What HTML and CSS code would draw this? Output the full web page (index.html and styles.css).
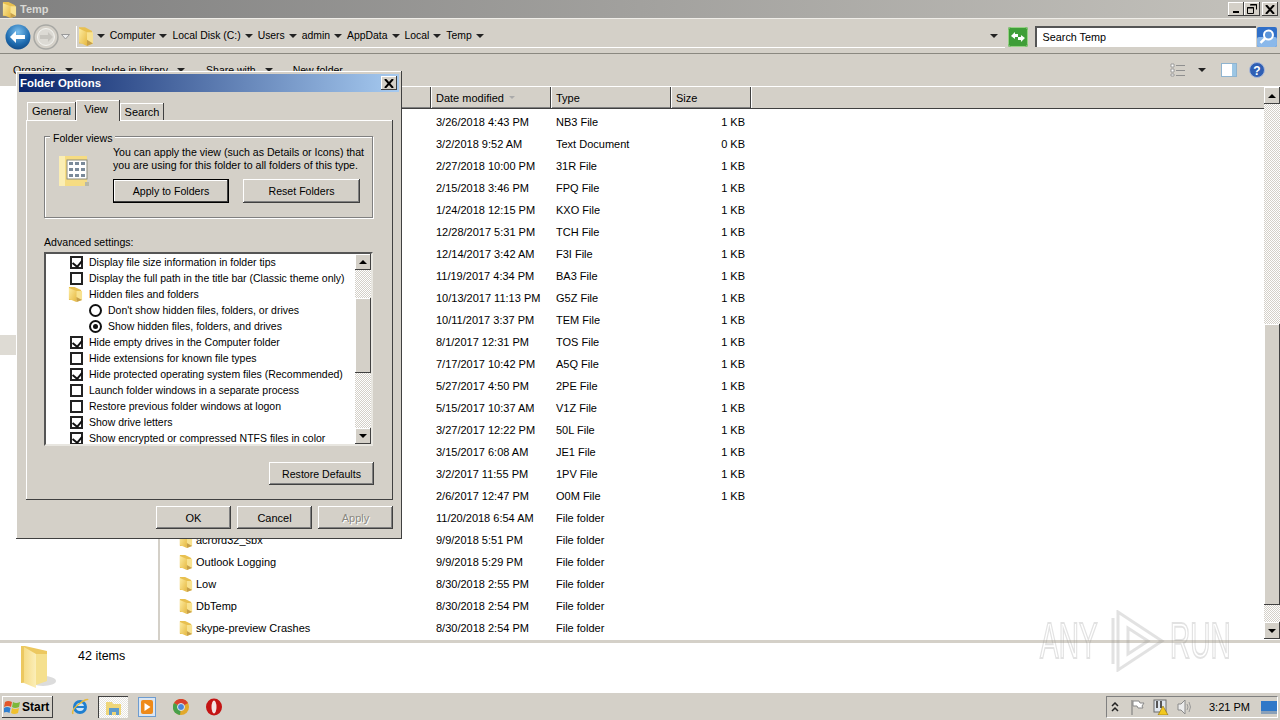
FILE: index.html
```html
<!DOCTYPE html>
<html lang="en">
<head>
    <meta charset="UTF-8">
    <title>Temp</title>
    <link rel="stylesheet" href="styles.css">
</head>
<body>
    <svg class="defs" width="0" height="0">
        <defs>
            <linearGradient id="fold" x1="0" y1="0" x2="1" y2="1">
                <stop offset="0" stop-color="#fdeca0"/>
                <stop offset="1" stop-color="#e6b840"/>
            </linearGradient>
            <symbol id="folder" viewBox="0 0 16 16" preserveAspectRatio="none">
                <path d="M1 1h6l7 3v10H1z" fill="#e8c050"/>
                <path d="M1 2l8 3v11l-8-3z" fill="url(#fold)"/>
                <path d="M9 5h6v9l-6 2z" fill="#f8e290"/>
                <path d="M9 11l6 3-6 2z" fill="#c8a048"/>
            </symbol>
        </defs>
    </svg>

    <header class="titlebar">
        <svg class="title-icon" width="15" height="17"><use href="#folder"/></svg>
        <span class="title-text">Temp</span>
        <div class="win-buttons">
            <div class="win-btn"><i class="glyph-min"></i></div>
            <div class="win-btn">
                <svg width="10" height="10" viewBox="0 0 10 10"><path d="M3.500.5h6v5M.5 3.500h6v6h-6z" fill="none" stroke="#000"/><path d="M3 1h7M0 4h7" stroke="#000"/></svg>
            </div>
            <div class="win-btn win-close"><svg width="10" height="9"><path d="M1 0l8 9M9 0l-8 9" stroke="#000" stroke-width="2"/></svg></div>
        </div>
    </header>

    <div class="addressbar">
        <svg class="nav-back" width="26" height="26" viewBox="0 0 26 26">
            <defs>
                <radialGradient id="blue" cx=".5" cy=".3" r=".8"><stop offset="0" stop-color="#7cc0ee"/><stop offset=".6" stop-color="#1f6cb0"/><stop offset="1" stop-color="#0c3f78"/></radialGradient>
            </defs>
            <circle cx="13" cy="13" r="12.500" fill="url(#blue)"/>
            <path d="M5 13l6-6v4h9v4h-9v4z" fill="#fff"/>
        </svg>
        <svg class="nav-forward" width="26" height="26" viewBox="0 0 26 26">
            <circle cx="13" cy="13" r="12" fill="#d4d0c8" stroke="#a8a8a4" stroke-width="1.500"/>
            <circle cx="13" cy="13" r="8.500" fill="#dcdad4" stroke="#f4f4f0"/>
            <path d="M20 13l-5-5v3H7v4h8v3z" fill="#c6c4be"/>
        </svg>
        <svg class="nav-drop" width="9" height="6"><path d="M.5.5h8L4.500 5z" fill="#eee" stroke="#999"/></svg>
        <div class="crumbs">
            <svg class="crumb-folder" width="16" height="20"><use href="#folder"/></svg>
            <span class="crumb"><i class="arrow"></i>Computer</span>
            <span class="crumb"><i class="arrow"></i>Local Disk (C:)</span>
            <span class="crumb"><i class="arrow"></i>Users</span>
            <span class="crumb"><i class="arrow"></i>admin</span>
            <span class="crumb"><i class="arrow"></i>AppData</span>
            <span class="crumb"><i class="arrow"></i>Local</span>
            <span class="crumb"><i class="arrow"></i>Temp</span>
            <span class="crumb"><i class="arrow"></i></span>
            <i class="arrow crumbs-drop"></i>
        </div>
        <svg class="refresh" width="20" height="20" viewBox="0 0 20 20">
            <rect width="20" height="20" rx="2" fill="#3f9e38"/>
            <rect x=".5" y=".5" width="19" height="19" rx="2" fill="none" stroke="#9ad488"/>
            <path d="M3 9l4-4v2h3v3H7v2zM17 11l-4 4v-2h-3v-3h3V8z" fill="#fff"/>
        </svg>
        <div class="searchbox">Search Temp</div>
        <svg class="searchbtn" width="20" height="20" viewBox="0 0 20 20">
            <rect width="20" height="20" rx="2" fill="#2f6fc8"/>
            <rect y="10" width="20" height="10" rx="2" fill="#8ab8ea"/>
            <circle cx="11.500" cy="8" r="4.500" fill="#5a94da" stroke="#fff" stroke-width="2"/>
            <path d="M8 11.500l-4.500 4.500" stroke="#fff" stroke-width="2.500"/>
        </svg>
    </div>

    <div class="toolbar">
        <span class="tool tool-organize">Organize<i class="arrow"></i></span>
        <span class="tool tool-library">Include in library<i class="arrow"></i></span>
        <span class="tool tool-share">Share with<i class="arrow"></i></span>
        <span class="tool">New folder</span>
        <div class="tool-icons">
            <svg width="16" height="14" viewBox="0 0 16 14">
                <path d="M1 1h3v3H1zM1 6h3v3H1zM1 11h3v2H1z" fill="#fff" stroke="#8a8a8a" stroke-width=".8"/>
                <path d="M6 2.500h9M6 7.500h9M6 12.500h9" stroke="#8f8f8f"/>
            </svg>
            <i class="arrow view-arrow"></i>
            <svg class="pane-icon" width="16" height="14" viewBox="0 0 16 14">
                <rect x=".5" y=".5" width="15" height="13" fill="#fff" stroke="#8fb4d0"/>
                <rect x="11" y="1" width="4" height="12" fill="#9cc6e4"/>
            </svg>
            <svg class="help-icon" width="16" height="16" viewBox="0 0 16 16">
                <circle cx="8" cy="8" r="7.500" fill="#2f5fb4" stroke="#a9b8d8"/>
                <text x="8" y="12.500" text-anchor="middle" class="help-mark">?</text>
            </svg>
        </div>
    </div>

    <main class="explorer">
        <nav class="navpane"><div class="nav-grip"></div></nav>
        <section class="files">
            <div class="cols head">
                <div class="hcell"></div>
                <div class="hcell">Date modified<i class="sort"></i></div>
                <div class="hcell">Type</div>
                <div class="hcell">Size</div>
                <div class="hcell hfill"></div>
            </div>
            <div class="rows">
                <div class="cols row"><span></span><span>3/26/2018 4:43 PM</span><span>NB3 File</span><span class="size">1 KB</span></div>
                <div class="cols row"><span></span><span>3/2/2018 9:52 AM</span><span>Text Document</span><span class="size">0 KB</span></div>
                <div class="cols row"><span></span><span>2/27/2018 10:00 PM</span><span>31R File</span><span class="size">1 KB</span></div>
                <div class="cols row"><span></span><span>2/15/2018 3:46 PM</span><span>FPQ File</span><span class="size">1 KB</span></div>
                <div class="cols row"><span></span><span>1/24/2018 12:15 PM</span><span>KXO File</span><span class="size">1 KB</span></div>
                <div class="cols row"><span></span><span>12/28/2017 5:31 PM</span><span>TCH File</span><span class="size">1 KB</span></div>
                <div class="cols row"><span></span><span>12/14/2017 3:42 AM</span><span>F3I File</span><span class="size">1 KB</span></div>
                <div class="cols row"><span></span><span>11/19/2017 4:34 PM</span><span>BA3 File</span><span class="size">1 KB</span></div>
                <div class="cols row"><span></span><span>10/13/2017 11:13 PM</span><span>G5Z File</span><span class="size">1 KB</span></div>
                <div class="cols row"><span></span><span>10/11/2017 3:37 PM</span><span>TEM File</span><span class="size">1 KB</span></div>
                <div class="cols row"><span></span><span>8/1/2017 12:31 PM</span><span>TOS File</span><span class="size">1 KB</span></div>
                <div class="cols row"><span></span><span>7/17/2017 10:42 PM</span><span>A5Q File</span><span class="size">1 KB</span></div>
                <div class="cols row"><span></span><span>5/27/2017 4:50 PM</span><span>2PE File</span><span class="size">1 KB</span></div>
                <div class="cols row"><span></span><span>5/15/2017 10:37 AM</span><span>V1Z File</span><span class="size">1 KB</span></div>
                <div class="cols row"><span></span><span>3/27/2017 12:22 PM</span><span>50L File</span><span class="size">1 KB</span></div>
                <div class="cols row"><span></span><span>3/15/2017 6:08 AM</span><span>JE1 File</span><span class="size">1 KB</span></div>
                <div class="cols row"><span></span><span>3/2/2017 11:55 PM</span><span>1PV File</span><span class="size">1 KB</span></div>
                <div class="cols row"><span></span><span>2/6/2017 12:47 PM</span><span>O0M File</span><span class="size">1 KB</span></div>
                <div class="cols row"><span></span><span>11/20/2018 6:54 AM</span><span>File folder</span><span></span></div>
                <div class="cols row"><span class="name"><svg width="14" height="16"><use href="#folder"/></svg>acrord32_sbx</span><span>9/9/2018 5:51 PM</span><span>File folder</span><span></span></div>
                <div class="cols row"><span class="name"><svg width="14" height="16"><use href="#folder"/></svg>Outlook Logging</span><span>9/9/2018 5:29 PM</span><span>File folder</span><span></span></div>
                <div class="cols row"><span class="name"><svg width="14" height="16"><use href="#folder"/></svg>Low</span><span>8/30/2018 2:55 PM</span><span>File folder</span><span></span></div>
                <div class="cols row"><span class="name"><svg width="14" height="16"><use href="#folder"/></svg>DbTemp</span><span>8/30/2018 2:54 PM</span><span>File folder</span><span></span></div>
                <div class="cols row"><span class="name"><svg width="14" height="16"><use href="#folder"/></svg>skype-preview Crashes</span><span>8/30/2018 2:54 PM</span><span>File folder</span><span></span></div>
            </div>
        </section>
        <div class="vscroll main-scroll">
            <div class="sbtn"><i class="tri-up"></i></div>
            <div class="track"><div class="thumb"></div></div>
            <div class="sbtn"><i class="tri-down"></i></div>
        </div>
    </main>

    <div class="statusbar">
        <svg width="38" height="44" viewBox="0 0 38 44">
            <defs>
                <linearGradient id="bigfold" x1="0" y1="0" x2="1" y2="0"><stop offset="0" stop-color="#f6dc88"/><stop offset="1" stop-color="#fbeeb8"/></linearGradient>
            </defs>
            <ellipse cx="24" cy="36" rx="13" ry="5" fill="#dcdcdc"/>
            <path d="M2 1h4l22 5v30L2 38z" fill="#ecc860"/>
            <path d="M5 2l12 7v34L5 38z" fill="url(#bigfold)"/>
            <path d="M17 9h11v27l-11 4z" fill="#f5e08e"/>
        </svg>
        <span class="status-text">42 items</span>
    </div>

    <footer class="taskbar">
        <div class="startbtn">
            <svg width="17" height="16" viewBox="0 0 17 16">
                <path d="M1 3q3-2 7 0l-1 5q-3-2-7 0z" fill="#e2562a"/>
                <path d="M9 3q3 2 7 0l-1 5q-4 2-7 0z" fill="#7cb83a"/>
                <path d="M0 9q3-2 6.500 0l-1 5q-3-2-7 0z" fill="#2f7fd0"/>
                <path d="M8 9q3 2 7 0l-1 5q-4 2-7 0z" fill="#f0c02c"/>
            </svg>
            <span>Start</span>
        </div>
        <div class="quick">
            <svg class="q-ie" width="18" height="18" viewBox="0 0 18 18">
                <circle cx="9" cy="9" r="5.500" fill="#cfe6f8" stroke="#1f7fd0" stroke-width="3"/>
                <path d="M4 9h10" stroke="#1f7fd0" stroke-width="2"/>
                <path d="M2 16Q0 12 8 6t9-4" fill="none" stroke="#e6b93a" stroke-width="1.500"/>
            </svg>
            <div class="q-explorer">
                <svg width="18" height="18" viewBox="0 0 18 18">
                    <path d="M1 3h6l1 2h8v11H1z" fill="#efd678"/>
                    <path d="M4 9h10v7h-3v-3H7v3H4z" fill="#5f9ccc"/>
                </svg>
            </div>
            <svg class="q-media" width="18" height="20" viewBox="0 0 18 20">
                <rect x=".5" y=".5" width="17" height="19" fill="#dbe6f2" stroke="#6d9cd0"/>
                <rect x="3" y="3" width="12" height="14" rx="2" fill="#ee8a1a"/>
                <path d="M6.500 6l6 4-6 4z" fill="#fff"/>
            </svg>
            <svg class="q-chrome" width="16" height="16" viewBox="0 0 16 16">
                <circle cx="8" cy="8" r="8" fill="#e2a92c"/>
                <path d="M8 8L1 4a8 8 0 0 1 14 0z" fill="#d8402f"/>
                <path d="M8 8L1 4a8 8 0 0 0 6 12z" fill="#48a04a"/>
                <circle cx="8" cy="8" r="3.500" fill="#4a86dc" stroke="#e8e8e8"/>
            </svg>
            <svg class="q-opera" width="16" height="18" viewBox="0 0 16 18">
                <ellipse cx="8" cy="9" rx="8" ry="8.500" fill="#c41414"/>
                <ellipse cx="8" cy="9" rx="2.500" ry="6.500" fill="#f4e4e4"/>
            </svg>
        </div>
        <div class="tray">
            <svg width="8" height="10" viewBox="0 0 8 10"><path d="M1 4l3-3 3 3M1 9l3-3 3 3" fill="none" stroke="#222" stroke-width="1.500"/></svg>
            <svg class="tray-flag" width="15" height="16" viewBox="0 0 15 16"><path d="M2 1v15" stroke="#777"/><path d="M3 2h6l1 2h4l-2 3 1 2H8L7 7H3z" fill="#fff" stroke="#888"/></svg>
            <svg width="16" height="16" viewBox="0 0 16 16">
                <rect x="1" y="1" width="12" height="12" fill="#dfe6ee" stroke="#6a6a6a"/>
                <path d="M4 2v7M8 2v7" stroke="#555" stroke-width="2"/>
                <path d="M10 7l5 9H5z" fill="#f2c81e" stroke="#8a6a10" stroke-width=".6"/>
            </svg>
            <svg width="16" height="16" viewBox="0 0 16 16">
                <path d="M1 5h3l4-4v14l-4-4H1z" fill="#ececec" stroke="#8a8a8a"/>
                <path d="M10 5q2 3 0 6M12 3q3 5 0 10" fill="none" stroke="#9a9a9a"/>
            </svg>
            <span class="clock">3:21 PM</span>
            <svg class="tray-desktop" width="16" height="13" viewBox="0 0 16 13">
                <rect width="16" height="10" fill="#2f78c8"/>
                <rect y="10" width="16" height="3" fill="#8aa0b8"/>
            </svg>
        </div>
    </footer>

    <div class="dialog">
        <div class="dlg-title">
            <span>Folder Options</span>
            <div class="dlg-close"><svg width="10" height="9"><path d="M1 0l8 9M9 0l-8 9" stroke="#000" stroke-width="2"/></svg></div>
        </div>
        <div class="tabs">
            <div class="tab tab-general">General</div>
            <div class="tab tab-active">View</div>
            <div class="tab tab-search">Search</div>
        </div>
        <div class="sheet">
            <div class="group">
                <span class="group-label">Folder views</span>
                <svg class="fv-icon" width="32" height="34" viewBox="0 0 32 34">
                    <path d="M1 1h28v30H1z" fill="#f6dc82"/>
                    <path d="M1 1h6v30H1z" fill="#fbeeb4"/>
                    <rect x="9" y="5" width="20" height="19" fill="#fff" stroke="#8a8a7a"/>
                    <path d="M11 7h4v3h-4zM17 7h4v3h-4zM23 7h4v3h-4zM11 13h4v3h-4zM17 13h4v3h-4zM23 13h4v3h-4zM11 19h4v3h-4zM17 19h4v3h-4zM23 19h4v3h-4z" fill="#7a8a9a"/>
                    <rect x="27" y="27" width="4" height="4" fill="#b8b8a8"/>
                </svg>
                <div class="group-body">
                    <p>You can apply the view (such as Details or Icons) that<br>you are using for this folder to all folders of this type.</p>
                    <div class="group-btns">
                        <div class="btn btn-default">Apply to Folders</div>
                        <div class="btn btn-reset">Reset Folders</div>
                    </div>
                </div>
            </div>
            <div class="adv-label">Advanced settings:</div>
            <div class="listbox">
                <div class="opts">
                    <div class="opt"><i class="check on"></i>Display file size information in folder tips</div>
                    <div class="opt"><i class="check"></i>Display the full path in the title bar (Classic theme only)</div>
                    <div class="opt opt-folder"><svg width="15" height="16"><use href="#folder"/></svg>Hidden files and folders</div>
                    <div class="opt opt-radio"><i class="radio"></i>Don't show hidden files, folders, or drives</div>
                    <div class="opt opt-radio"><i class="radio on"></i>Show hidden files, folders, and drives</div>
                    <div class="opt"><i class="check on"></i>Hide empty drives in the Computer folder</div>
                    <div class="opt"><i class="check"></i>Hide extensions for known file types</div>
                    <div class="opt"><i class="check on"></i>Hide protected operating system files (Recommended)</div>
                    <div class="opt"><i class="check"></i>Launch folder windows in a separate process</div>
                    <div class="opt"><i class="check"></i>Restore previous folder windows at logon</div>
                    <div class="opt"><i class="check on"></i>Show drive letters</div>
                    <div class="opt"><i class="check on"></i>Show encrypted or compressed NTFS files in color</div>
                </div>
                <div class="vscroll dlg-scroll">
                    <div class="sbtn"><i class="tri-up"></i></div>
                    <div class="track"><div class="thumb"></div></div>
                    <div class="sbtn"><i class="tri-down"></i></div>
                </div>
            </div>
            <div class="restore-row"><div class="btn btn-restore">Restore Defaults</div></div>
        </div>
        <div class="dlg-actions">
            <div class="btn btn-action">OK</div>
            <div class="btn btn-action">Cancel</div>
            <div class="btn btn-action btn-disabled">Apply</div>
        </div>
    </div>

    <div class="watermark">
        <span class="wm-text wm-any">ANY</span>
        <svg class="wm-play" width="56" height="62" viewBox="0 0 56 62">
            <path d="M3 8v46M8 2l44 29L8 60zM18 18l20 13-20 13z" fill="none" stroke="#8a8a8a" stroke-width="3"/>
        </svg>
        <span class="wm-text wm-run">RUN</span>
    </div>
</body>
</html>
```

FILE: styles.css
```css
/* page */
* {
    box-sizing: border-box;
}

html, body {
    margin: 0;
    height: 720px;
    overflow: hidden;
}

body {
    position: relative;
    display: flex;
    flex-direction: column;
    width: 1280px;
    font-family: "Liberation Sans", Arial, sans-serif;
    font-size: 11px;
    color: #000;
    background: #d4d0c8;
}

i {
    display: block;
}

.defs {
    position: absolute;
}

.arrow {
    width: 0;
    height: 0;
    border-left: 4px solid transparent;
    border-right: 4px solid transparent;
    border-top: 4px solid #222;
}

/* title bar */
.titlebar {
    display: flex;
    align-items: center;
    flex: 0 0 18px;
    padding-left: 2px;
    background: linear-gradient(to right, #808080, #c4c2bc);
}

.title-text {
    margin-left: 3px;
    font-weight: bold;
    color: #d8d8d4;
}

.win-buttons {
    display: flex;
    margin-left: auto;
    margin-right: 2px;
}

.win-btn {
    display: flex;
    align-items: center;
    justify-content: center;
    width: 16px;
    height: 14px;
    background: #d4d0c8;
    box-shadow: inset -1px -1px #404040, inset 1px 1px #fff;
}

.win-close {
    margin-left: 2px;
}

.glyph-min {
    width: 6px;
    height: 2px;
    margin-top: 6px;
    background: #000;
}

/* address bar */
.addressbar {
    display: flex;
    align-items: center;
    flex: 0 0 36px;
    padding: 1px 3px 0 5px;
    border-top: 1px solid #efede8;
    border-bottom: 1px solid #8a8880;
}

.nav-forward {
    margin-left: 2px;
}

.nav-drop {
    margin-left: 2px;
}

.crumbs {
    display: flex;
    align-items: center;
    width: 931px;
    height: 22px;
    margin-left: 6px;
    padding: 0 0 1px 1px;
    font-size: 10.4px;
    border-bottom: 1px solid #fff;
    border-left: 1px solid #fff;
}

.crumb-folder {
    margin: 1px 3px 0 0;
}

.crumb {
    display: flex;
    align-items: center;
    margin-right: 4px;
}

.crumb .arrow {
    margin-right: 5px;
}

.crumbs-drop {
    margin-left: auto;
    margin-right: 7px;
}

.refresh {
    margin-left: 3px;
}

.searchbox {
    display: flex;
    align-items: center;
    width: 222px;
    height: 21px;
    margin-left: 7px;
    padding: 0 0 1px 6px;
    font-size: 10.8px;
    background: #fff;
    border-top: 2px solid #555;
    border-left: 2px solid #555;
}

.searchbtn {
    margin-left: 1px;
}

/* command bar */
.toolbar {
    display: flex;
    align-items: center;
    flex: 0 0 32px;
    padding-left: 13px;
    font-size: 10.5px;
}

.tool {
    display: flex;
    align-items: center;
}

.tool .arrow {
    margin-left: 9px;
}

.tool-organize {
    margin-right: 19px;
}

.tool-library {
    margin-right: 21px;
}

.tool-share {
    margin-right: 20px;
}

.tool-icons {
    display: flex;
    align-items: center;
    margin-left: auto;
    margin-right: 15px;
}

.view-arrow {
    margin-left: 12px;
}

.pane-icon {
    margin-left: 15px;
}

.help-icon {
    margin-left: 12px;
}

.help-mark {
    font-size: 12px;
    font-weight: bold;
    fill: #fff;
}

/* file list */
.explorer {
    display: flex;
    flex: 0 0 554px;
    background: #fff;
    border-top: 1px solid #fff;
}

.navpane {
    flex: 0 0 160px;
    padding-top: 248px;
    border-right: 2px solid #d4d0c8;
}

.nav-grip {
    width: 16px;
    height: 20px;
    background: #dedbd4;
}

.files {
    flex: 1;
    min-width: 0;
}

.cols {
    display: grid;
    grid-template-columns: 271px 120px 120px 80px 1fr;
}

.head {
    height: 22px;
    background: #d4d0c8;
    border-bottom: 1px solid #404040;
}

.hcell {
    display: flex;
    align-items: center;
    padding-left: 5px;
    box-shadow: inset 1px 0 #fff, inset -1px 0 #404040, inset 0 -1px #808080;
}

.hfill {
    box-shadow: inset 1px 0 #fff;
}

.sort {
    width: 0;
    height: 0;
    margin-left: 5px;
    border-left: 3px solid transparent;
    border-right: 3px solid transparent;
    border-top: 3px solid #aaa;
}

.rows {
    padding-top: 2px;
}

.row {
    height: 22px;
    align-items: center;
}

.row span {
    padding-left: 5px;
    white-space: nowrap;
}

.row .name {
    display: flex;
    align-items: center;
    gap: 3px;
    padding-left: 19px;
}

.row .size {
    padding-right: 6px;
    text-align: right;
}

/* scrollbars */
.vscroll {
    display: flex;
    flex-direction: column;
    flex: 0 0 16px;
}

.main-scroll {
    padding-bottom: 1px;
}

.sbtn {
    display: flex;
    align-items: center;
    justify-content: center;
    flex: 0 0 17px;
    background: #d4d0c8;
    box-shadow: inset -1px -1px #404040, inset 1px 1px #fff;
}

.tri-up, .tri-down {
    width: 0;
    height: 0;
    border-left: 4px solid transparent;
    border-right: 4px solid transparent;
}

.tri-up {
    border-bottom: 4px solid #000;
}

.tri-down {
    border-top: 4px solid #000;
}

.track {
    flex: 1;
    background: repeating-conic-gradient(#fff 0 25%, #d4d0c8 0 50%) 0 0 / 2px 2px;
}

.thumb {
    background: #d4d0c8;
    box-shadow: inset -1px -1px #404040, inset 1px 1px #fff;
}

.main-scroll .thumb {
    height: 281px;
    margin-top: 220px;
}

.dlg-scroll .thumb {
    height: 75px;
    margin-top: 28px;
}

/* status bar */
.statusbar {
    display: flex;
    flex: 0 0 49px;
    margin-top: 3px;
    padding: 2px 0 0 19px;
    background: #fff;
}

.status-text {
    margin: 4px 0 0 21px;
    font-size: 12.5px;
}

/* taskbar */
.taskbar {
    display: flex;
    align-items: center;
    flex: 0 0 28px;
    padding: 1px 2px 0;
    border-top: 1px solid #fff;
}

.startbtn {
    display: flex;
    align-items: center;
    gap: 1px;
    width: 51px;
    height: 22px;
    padding-left: 2px;
    font-size: 12px;
    font-weight: bold;
    background: #d4d0c8;
    box-shadow: inset -1px -1px #404040, inset 1px 1px #fff;
}

.quick {
    display: flex;
    align-items: center;
    margin-left: 18px;
}

.q-explorer {
    display: flex;
    align-items: center;
    justify-content: center;
    width: 30px;
    height: 22px;
    margin-left: 9px;
    background: repeating-conic-gradient(#fff 0 25%, #e6e4de 0 50%) 0 0 / 2px 2px;
    border-top: 1px solid #404040;
    border-left: 1px solid #404040;
}

.q-media {
    margin-left: 10px;
}

.q-chrome {
    margin-left: 17px;
}

.q-opera {
    margin-left: 17px;
}

.tray {
    display: flex;
    align-items: center;
    width: 172px;
    height: 22px;
    margin-left: auto;
    padding-left: 4px;
    gap: 8px;
    border: 1px solid;
    border-color: #808080 #fff #fff #808080;
}

.tray-flag {
    margin-left: 3px;
}

.clock {
    margin-left: 8px;
    font-size: 11px;
    white-space: nowrap;
}

.tray-desktop {
    margin-left: 3px;
}

/* folder options dialog */
.dialog {
    position: absolute;
    left: 16px;
    top: 71px;
    width: 386px;
    height: 468px;
    padding: 3px;
    background: #d4d0c8;
    box-shadow: inset -1px -1px #404040, inset 1px 1px #fff;
}

.dlg-title {
    display: flex;
    align-items: center;
    justify-content: space-between;
    height: 18px;
    padding: 0 2px 0 1px;
    font-size: 11.4px;
    font-weight: bold;
    color: #fff;
    background: linear-gradient(to right, #0a246a, #a6caf0);
}

.dlg-close {
    display: flex;
    align-items: center;
    justify-content: center;
    width: 16px;
    height: 14px;
    background: #d4d0c8;
    box-shadow: inset -1px -1px #404040, inset 1px 1px #fff;
}

.tabs {
    display: flex;
    align-items: flex-end;
    height: 28px;
    padding-left: 8px;
}

.tab {
    display: flex;
    align-items: center;
    justify-content: center;
    background: #d4d0c8;
    box-shadow: inset -1px 0 #404040, inset 1px 1px #fff;
}

.tab-general {
    width: 49px;
    height: 18px;
}

.tab-active {
    position: relative;
    z-index: 1;
    width: 44px;
    height: 21px;
    margin-bottom: -1px;
    padding: 0 4px 4px 0;
}

.tab-search {
    width: 44px;
    height: 17px;
}

.sheet {
    width: 367px;
    height: 380px;
    margin-left: 7px;
    padding: 16px 20px 0 18px;
    font-size: 10.6px;
    box-shadow: inset -1px -1px #404040, inset 1px 1px #fff;
}

.group {
    position: relative;
    display: flex;
    height: 82px;
    border: 1px solid #808080;
    box-shadow: 1px 1px #fff, inset 1px 1px #fff;
}

.group-label {
    position: absolute;
    left: 5px;
    top: -5px;
    padding: 0 3px 0 3px;
    background: #d4d0c8;
}

.fv-icon {
    margin: 18px 0 0 13px;
}

.group-body {
    margin-left: 23px;
    padding-top: 9px;
}

.group-body p {
    margin: 0;
    line-height: 13px;
    white-space: nowrap;
}

.group-btns {
    display: flex;
    gap: 14px;
    margin-top: 7px;
}

.btn {
    display: flex;
    align-items: center;
    justify-content: center;
    height: 24px;
    background: #d4d0c8;
    box-shadow: inset -1px -1px #404040, inset 1px 1px #fff, inset -2px -2px #808080;
}

.btn-default {
    width: 116px;
    border: 1px solid #000;
    box-shadow: inset -1px -1px #404040, inset 1px 1px #fff;
}

.btn-reset {
    width: 117px;
}

.adv-label {
    margin-top: 18px;
    height: 16px;
    line-height: 13px;
}

.listbox {
    display: flex;
    height: 194px;
    background: #fff;
    border: 2px solid;
    border-color: #555 #e8e6e0 #e8e6e0 #555;
}

.opts {
    flex: 1;
    min-width: 0;
    overflow: hidden;
    font-size: 10.5px;
}

.opt {
    display: flex;
    align-items: center;
    gap: 6px;
    height: 16px;
    padding-left: 24px;
    white-space: nowrap;
}

.opt-folder {
    padding-left: 22px;
}

.opt-radio {
    padding-left: 43px;
}

.dlg-scroll .sbtn {
    flex-basis: 16px;
}

.check {
    position: relative;
    flex: 0 0 13px;
    height: 13px;
    background: #fff;
    border: 2px solid #222;
}

.check.on::after {
    content: "";
    position: absolute;
    left: 2px;
    top: 0;
    width: 5px;
    height: 7px;
    border-right: 2px solid #111;
    border-bottom: 2px solid #111;
    transform: rotate(40deg);
}

.radio {
    position: relative;
    flex: 0 0 13px;
    height: 13px;
    background: #fff;
    border: 2px solid #111;
    border-radius: 50%;
}

.radio.on::after {
    content: "";
    position: absolute;
    left: 2px;
    top: 2px;
    width: 5px;
    height: 5px;
    background: #111;
    border-radius: 50%;
}

.restore-row {
    display: flex;
    justify-content: flex-end;
    margin: 16px -1px 0 0;
}

.btn-restore {
    width: 105px;
    height: 23px;
}

.dlg-actions {
    display: flex;
    justify-content: flex-end;
    gap: 6px;
    margin-top: 6px;
    padding-right: 6px;
}

.btn-action {
    width: 75px;
    height: 23px;
}

.btn-disabled {
    color: #8a8880;
    text-shadow: 1px 1px #fff;
}

/* watermark */
.watermark {
    position: absolute;
    left: 1040px;
    top: 609px;
    display: flex;
    align-items: center;
    width: 196px;
    height: 64px;
    opacity: .24;
    filter: blur(.5px);
    pointer-events: none;
}

.wm-text {
    display: block;
    width: 62px;
    font-size: 50px;
    line-height: 64px;
    color: transparent;
    -webkit-text-stroke: 2px #8a8a8a;
    transform: scaleX(.56);
    transform-origin: 0 50%;
    white-space: nowrap;
}

.wm-play {
    margin-left: 8px;
    flex: 0 0 56px;
}

.wm-run {
    margin-left: 4px;
}
```
